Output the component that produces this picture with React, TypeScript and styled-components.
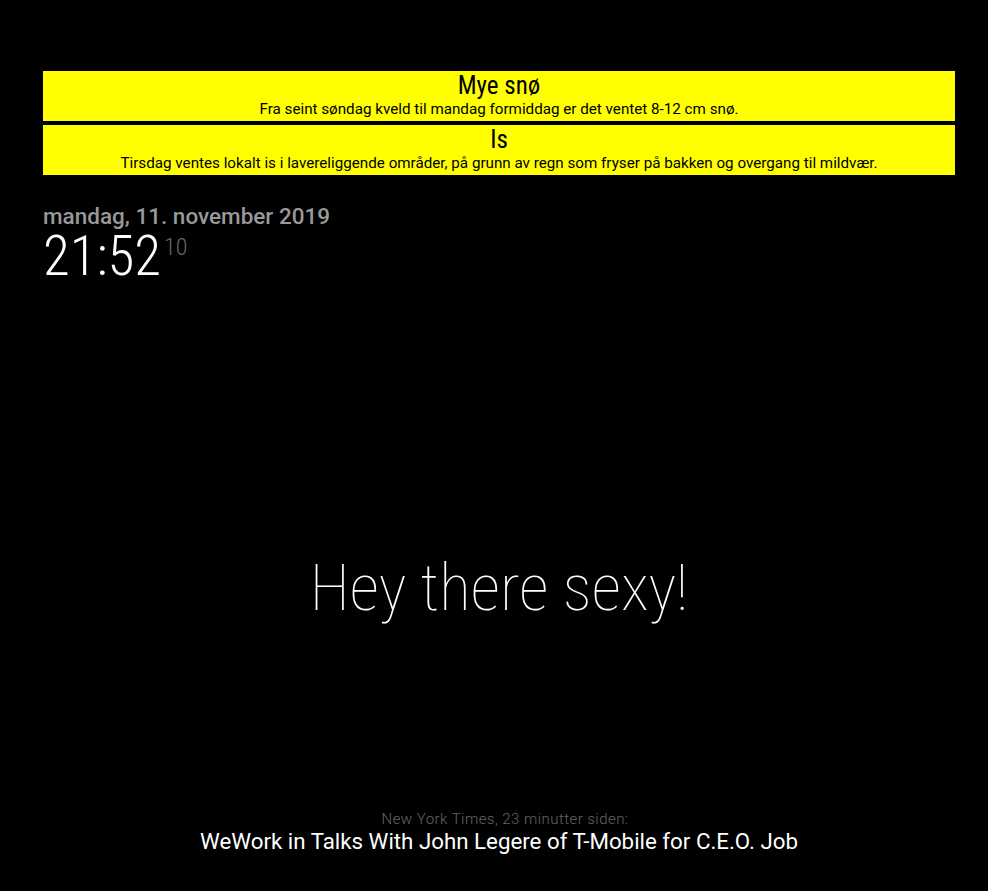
import * as React from "react";
import styled, { createGlobalStyle } from "styled-components";

const GlobalStyle = createGlobalStyle`
  html, body {
    margin: 0;
    padding: 0;
    background: #000;
  }
  body {
    font-family: Roboto, "Liberation Sans", sans-serif;
    color: #fff;
  }
`;

const condensed = `"Roboto Condensed", Roboto, "Liberation Sans", sans-serif`;

const Screen = styled.div`
  width: 988px;
  height: 891px;
  box-sizing: border-box;
  padding: 71px 33px 0 43px;
  display: flex;
  flex-direction: column;
  overflow: hidden;
`;

const AlertList = styled.div`
  display: flex;
  flex-direction: column;
  gap: 4px;
`;

const Alert = styled.div`
  height: 50px;
  background: #ffff00;
  color: #000;
  text-align: center;
  display: flex;
  flex-direction: column;
  align-items: center;
`;

const AlertTitle = styled.div`
  font-family: ${condensed};
  font-size: 25px;
  line-height: 28px;
  margin-top: 1px;
`;

const AlertText = styled.div`
  font-size: 15.2px;
  line-height: 19px;
  white-space: nowrap;
`;

const Clock = styled.div`
  margin-top: 29px;
  display: flex;
  flex-direction: column;
`;

const DateLine = styled.div`
  font-size: 22.5px;
  line-height: 24px;
  font-weight: 500;
  color: #999;
`;

const TimeLine = styled.div`
  display: flex;
  align-items: flex-start;
  color: #fff;
`;

const HourMinute = styled.span`
  font-family: ${condensed};
  font-size: 55px;
  line-height: 56px;
  font-weight: 300;
`;

const Seconds = styled.span`
  font-family: ${condensed};
  font-size: 24px;
  line-height: 24px;
  font-weight: 300;
  color: #666;
  margin-left: 3px;
  margin-top: 7px;
`;

const Greeting = styled.div`
  margin-top: 264px;
  text-align: center;
  font-family: ${condensed};
  font-weight: 100;
  font-size: 65px;
  line-height: 80px;
  color: #fff;
`;

const News = styled.div`
  margin-top: auto;
  margin-bottom: 36px;
  display: flex;
  flex-direction: column;
  align-items: center;
`;

const NewsSource = styled.div`
  font-weight: 300;
  font-size: 15px;
  letter-spacing: 0.45px;
  line-height: 16px;
  color: #666;
  padding-left: 12px;
`;

const NewsTitle = styled.div`
  font-size: 22.3px;
  line-height: 28px;
  color: #fff;
`;

const alerts = [
  {
    title: "Mye snø",
    text: "Fra seint søndag kveld til mandag formiddag er det ventet 8-12 cm snø.",
  },
  {
    title: "Is",
    text: "Tirsdag ventes lokalt is i lavereliggende områder, på grunn av regn som fryser på bakken og overgang til mildvær.",
  },
];

export default function App() {
  return (
    <>
      <GlobalStyle />
      <Screen>
        <AlertList>
          {alerts.map((a) => (
            <Alert key={a.title}>
              <AlertTitle>{a.title}</AlertTitle>
              <AlertText>{a.text}</AlertText>
            </Alert>
          ))}
        </AlertList>
        <Clock>
          <DateLine>mandag, 11. november 2019</DateLine>
          <TimeLine>
            <HourMinute>21:52</HourMinute>
            <Seconds>10</Seconds>
          </TimeLine>
        </Clock>
        <Greeting>Hey there sexy!</Greeting>
        <News>
          <NewsSource>New York Times, 23 minutter siden:</NewsSource>
          <NewsTitle>WeWork in Talks With John Legere of T-Mobile for C.E.O. Job</NewsTitle>
        </News>
      </Screen>
    </>
  );
}
